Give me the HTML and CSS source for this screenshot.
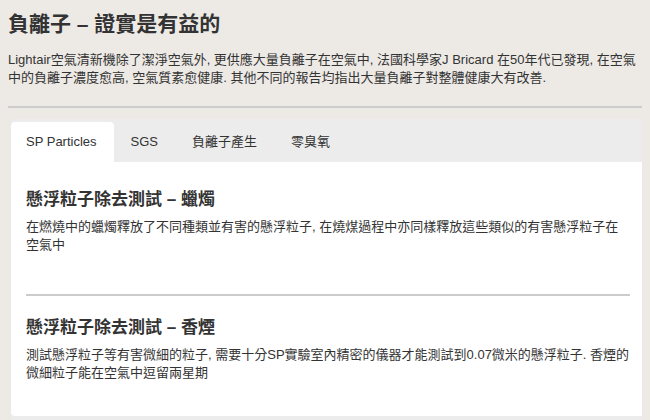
FILE: index.html
```html
<!DOCTYPE html>
<html lang="zh-Hant">
<head>
<meta charset="utf-8">
<title>負離子 – 證實是有益的</title>
<link rel="stylesheet" href="styles.css">
</head>
<body>
<h1 class="page-title">負離子 – 證實是有益的</h1>
<p class="intro">Lightair空氣清新機除了潔淨空氣外, 更供應大量負離子在空氣中, 法國科學家J Bricard 在50年代已發現, 在空氣中的負離子濃度愈高, 空氣質素愈健康. 其他不同的報告均指出大量負離子對整體健康大有改善.</p>
<hr class="rule">
<div class="tabs">
  <ul class="tab-nav">
    <li class="tab active">SP Particles</li>
    <li class="tab">SGS</li>
    <li class="tab">負離子產生</li>
    <li class="tab">零臭氧</li>
  </ul>
  <div class="panel">
    <div class="article">
      <h2 class="article-title">懸浮粒子除去測試 – 蠟燭</h2>
      <p class="article-text">在燃燒中的蠟燭釋放了不同種類並有害的懸浮粒子, 在燒煤過程中亦同樣釋放這些類似的有害懸浮粒子在空氣中</p>
    </div>
    <hr class="divider">
    <div class="article">
      <h2 class="article-title">懸浮粒子除去測試 – 香煙</h2>
      <p class="article-text">測試懸浮粒子等有害微細的粒子, 需要十分SP實驗室內精密的儀器才能測試到0.07微米的懸浮粒子. 香煙的微細粒子能在空氣中逗留兩星期</p>
    </div>
  </div>
</div>
</body>
</html>
```
FILE: styles.css
```css
html, body {
  background: #edeae6;
}
body {
  margin: 8px;
  color: #333;
  font-family: "Liberation Sans", "Noto Sans CJK TC", sans-serif;
  overflow: hidden;
}
.page-title {
  margin: 3px 0 0;
  font-size: 21px;
  line-height: 26px;
  font-weight: bold;
  color: #333;
}
.intro {
  margin: 14px 0 0;
  font-size: 13px;
  line-height: 18px;
}
.rule {
  margin: 19px -7px 0 0;
  border: 0;
  height: 2px;
  background: #cccccc;
}
.tabs {
  margin: 11px -4px 0 3px;
  background: #ececec;
  border-radius: 4px;
  padding-bottom: 4px;
}
.tab-nav {
  list-style: none;
  margin: 0;
  padding: 3px 0 0;
  display: flex;
  height: 40px;
}
.tab {
  padding: 0 17px;
  line-height: 40px;
  font-size: 13px;
  color: #333;
}
.tab.active {
  background: #fff;
  border-radius: 4px 4px 0 0;
  padding: 0 17px 0 15px;
}
.panel {
  background: #fff;
  margin-right: 1px;
  padding: 26px 15px 34px;
  border-radius: 0 0 4px 4px;
}
.article-title {
  margin: 0 0 6px;
  font-size: 17px;
  line-height: 24px;
  font-weight: bold;
}
.article-text {
  margin: 0;
  font-size: 13px;
  line-height: 18px;
}
.divider {
  margin: 40px 0 20px;
  border: 0;
  height: 2px;
  background: #cccccc;
}
```
